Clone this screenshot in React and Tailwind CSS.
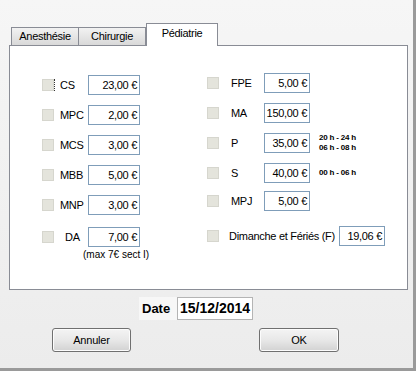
import React from "react"

const font = { fontFamily: '"Liberation Sans", Arial, sans-serif' }

const CheckBox = ({ focus }) => (
  <div className="flex items-center">
    <div className="w-[12px] h-[12px] bg-[#e4e4dc] border border-[#d6d6ce]" />
    {focus ? <div className="w-px h-[12px] border-r border-dotted border-[#333]" /> : <div className="w-px" />}
  </div>
)

const Field = ({ value, w }) => (
  <div
    className={`${w} h-[20px] border border-[#7f9db9] bg-white flex items-center justify-end pr-[2px] text-[11px] tracking-[-0.3px] text-black`}
  >
    {value}
  </div>
)

const LeftRow = ({ label, value, focus, labelClass = "" }) => (
  <div className="flex items-center h-[30px]">
    <CheckBox focus={focus} />
    <div className={`w-[28px] ml-[5px] text-[11px] tracking-[-0.3px] ${labelClass}`}>{label}</div>
    <Field value={value} w="w-[52px]" />
  </div>
)

const RightRow = ({ label, value, note, h = "h-[30px]" }) => (
  <div className={`flex items-center ${h}`}>
    <CheckBox />
    <div className="w-[33px] ml-[11px] text-[11px] tracking-[-0.3px]">{label}</div>
    <Field value={value} w="w-[46px]" />
    {note && <div className="ml-[9px] text-[8px] font-bold leading-[10px] tracking-[-0.2px]">{note}</div>}
  </div>
)

const Button = ({ children, w }) => (
  <div
    className={`${w} h-[24px] rounded-[3px] border border-[#707070] flex items-center justify-center text-[11px] tracking-[-0.2px] bg-gradient-to-b from-[#f4f4f4] via-[#e8e8e8] to-[#d2d2d2] shadow-[inset_0_0_0_1px_#fcfcfc]`}
  >
    {children}
  </div>
)

export default function App() {
  return (
    <div
      style={font}
      className="w-[416px] h-[371px] flex flex-col text-black bg-gradient-to-b from-[#f6f6f6] to-[#ececec] border-r-[3px] border-b-[3px] border-[#9a9a9a]"
    >
      {/* Tabs */}
      <div className="flex items-end h-[22px] mt-[23px] ml-[11px]">
        <div className="w-[68px] h-[18px] border border-b-0 border-[#898c95] bg-gradient-to-b from-[#f2f2f2] to-[#d9d9d9] flex items-center justify-center text-[11px] tracking-[-0.3px]">
          Anesthésie
        </div>
        <div className="w-[67px] h-[18px] border border-l-0 border-b-0 border-[#898c95] bg-gradient-to-b from-[#f2f2f2] to-[#d9d9d9] flex items-center justify-center text-[11px] tracking-[-0.3px]">
          Chirurgie
        </div>
        <div className="relative z-10 -mb-px w-[72px] h-[23px] border border-b-0 border-[#898c95] bg-white flex items-center justify-center text-[11px] tracking-[-0.3px] pb-[3px]">
          Pédiatrie
        </div>
      </div>

      {/* Panel */}
      <div className="ml-[9px] w-[399px] h-[245px] border border-[#898c95] bg-white flex pl-[32px] pt-[24px]">
        <div className="w-[165px] flex flex-col">
          <LeftRow label="CS" value="23,00 €" focus />
          <LeftRow label="MPC" value="2,00 €" />
          <LeftRow label="MCS" value="3,00 €" />
          <LeftRow label="MBB" value="5,00 €" />
          <LeftRow label="MNP" value="3,00 €" />
          <div className="mt-[2px]">
            <LeftRow label="DA" value="7,00 €" labelClass="pl-[5px]" />
          </div>
          <div className="ml-[41px] -mt-[3px] text-[10px] leading-[12px]">(max 7€ sect I)</div>
        </div>
        <div className="flex flex-col -mt-[2px]">
          <RightRow label="FPE" value="5,00 €" />
          <RightRow label="MA" value="150,00 €" />
          <RightRow
            label="P"
            value="35,00 €"
            note={
              <>
                <div>20 h - 24 h</div>
                <div>06 h - 08 h</div>
              </>
            }
          />
          <RightRow label="S" value="40,00 €" note="00 h - 06 h" />
          <RightRow label="MPJ" value="5,00 €" h="h-[26px]" />
          <div className="flex items-center h-[30px] mt-[7px]">
            <CheckBox />
            <div className="w-[110px] ml-[9px] text-[11px] tracking-[-0.3px]">Dimanche et Fériés (F)</div>
            <Field value="19,06 €" w="w-[46px]" />
          </div>
        </div>
      </div>

      {/* Date */}
      <div className="flex items-center mt-[7px] ml-[139px] h-[23px]">
        <div className="w-[38px] h-full flex items-center pl-[3px] bg-[#f7f7f7] text-[13px] font-bold">Date</div>
        <div className="w-[76px] h-full border border-[#b4b4b4] bg-white flex items-center pl-[2px] text-[14px] font-bold">
          15/12/2014
        </div>
      </div>

      {/* Buttons */}
      <div className="flex mt-[8px] ml-[52px] gap-[128px]">
        <Button w="w-[79px]">Annuler</Button>
        <Button w="w-[80px]">OK</Button>
      </div>
    </div>
  )
}
